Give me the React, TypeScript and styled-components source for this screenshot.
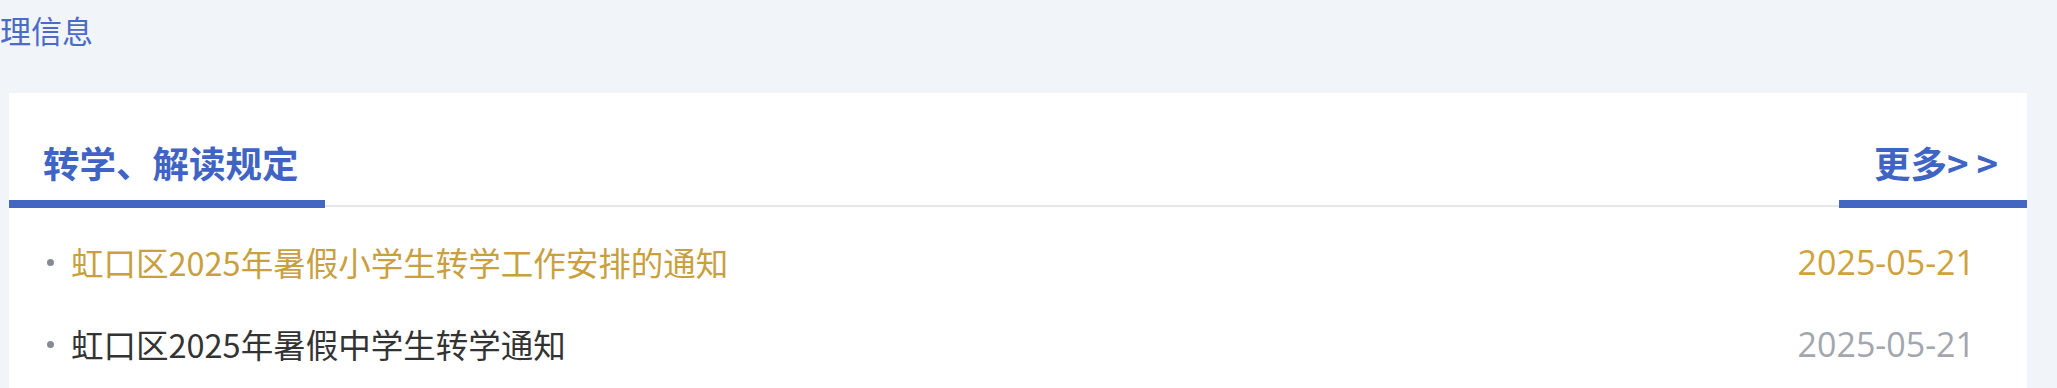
import React from "react";
import styled, { createGlobalStyle } from "styled-components";

const GlobalStyle = createGlobalStyle`
  html, body {
    margin: 0;
    padding: 0;
    background: #f1f4f9;
    overflow: hidden;
  }
  body {
    font-family: "Noto Sans CJK SC", "Noto Sans", sans-serif;
  }
`;

const Page = styled.div`
  width: 2057px;
  height: 388px;
  overflow: hidden;
  background: #f1f4f9;
`;

const SectionHeading = styled.h2`
  margin: 0 0 39px 0;
  padding-top: 6px;
  font-size: 31px;
  line-height: 48px;
  font-weight: 400;
  color: #4a6bc6;
  white-space: nowrap;
`;

const Card = styled.section`
  margin-left: 9px;
  width: 2018px;
  height: 300px;
  background: #ffffff;
`;

const Header = styled.div`
  display: flex;
  justify-content: space-between;
  align-items: flex-end;
  border-bottom: 2px solid #e3e7ee;
`;

const Tab = styled.div<{ $left: number; $right: number }>`
  padding: 45px ${(p) => p.$right}px 12px ${(p) => p.$left}px;
  margin-bottom: -3px;
  border-bottom: 8px solid #4266c2;
  font-size: 36.5px;
  line-height: 50px;
  font-weight: 700;
  color: #4064c4;
  white-space: nowrap;
`;

const Arrows = styled.span`
  letter-spacing: 8px;
  font-weight: 700;
`;

const List = styled.ul`
  list-style: none;
  margin: 0;
  padding: 14px 52px 0 38px;
`;

const Row = styled.li<{ $active?: boolean }>`
  display: flex;
  align-items: center;
  height: 82px;
  color: ${(p) => (p.$active ? "#c9a040" : "#333333")};
`;

const Bullet = styled.span`
  width: 7px;
  height: 7px;
  border-radius: 50%;
  background: #858a94;
  margin-right: 17px;
  flex-shrink: 0;
`;

const Title = styled.span`
  flex: 1;
  font-size: 32.5px;
  line-height: 82px;
  white-space: nowrap;
`;

const DateText = styled.span<{ $active?: boolean }>`
  font-family: "Open Sans", "Noto Sans", sans-serif;
  font-size: 34px;
  line-height: 82px;
  color: ${(p) => (p.$active ? "#cfa23a" : "#a2a6ae")};
`;

const items = [
  { title: "虹口区2025年暑假小学生转学工作安排的通知", date: "2025-05-21", active: true },
  { title: "虹口区2025年暑假中学生转学通知", date: "2025-05-21", active: false },
];

export default function App() {
  return (
    <>
      <GlobalStyle />
      <Page>
        <SectionHeading>理信息</SectionHeading>
        <Card>
          <Header>
            <Tab $left={34} $right={26}>转学、解读规定</Tab>
            <Tab $left={35} $right={21}>
              更多<Arrows>&gt;&gt;</Arrows>
            </Tab>
          </Header>
          <List>
            {items.map((it) => (
              <Row key={it.title} $active={it.active}>
                <Bullet />
                <Title>{it.title}</Title>
                <DateText $active={it.active}>{it.date}</DateText>
              </Row>
            ))}
          </List>
        </Card>
      </Page>
    </>
  );
}
